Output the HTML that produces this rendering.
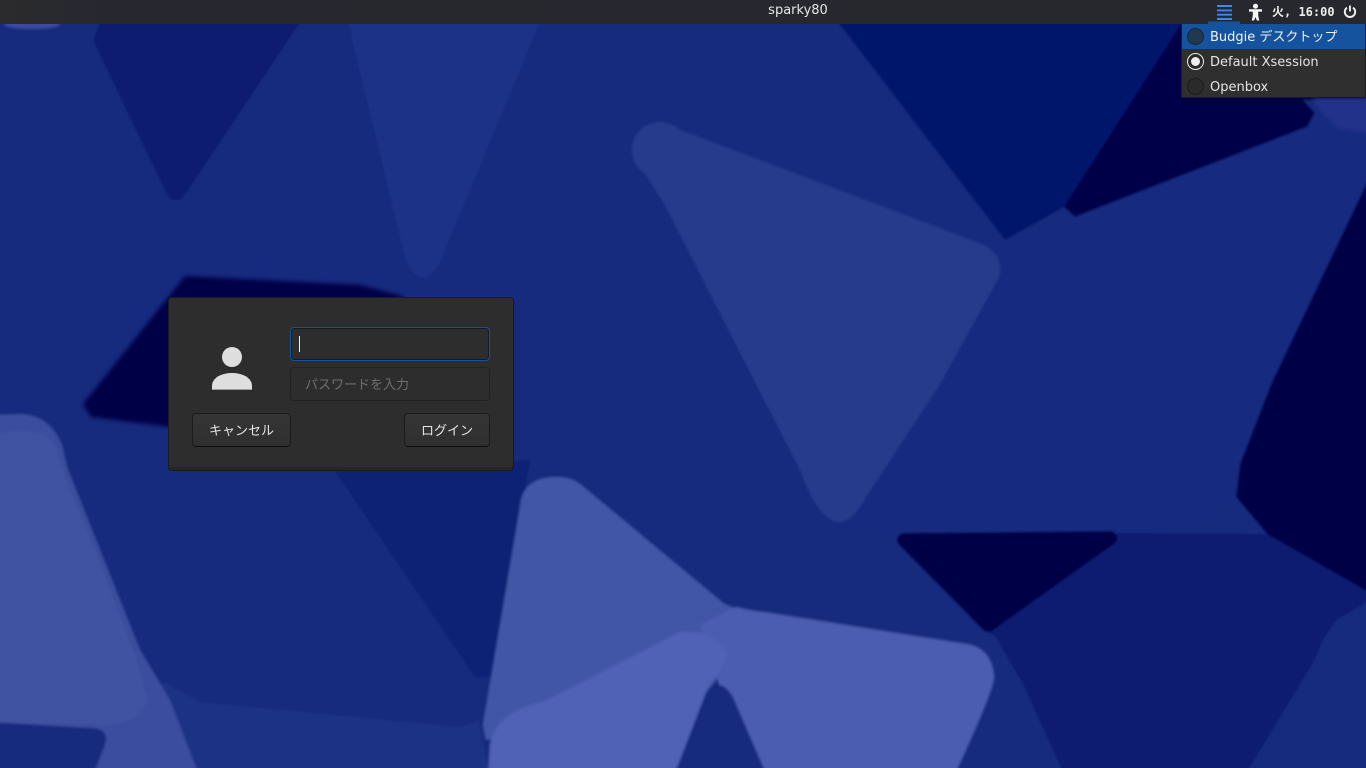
<!DOCTYPE html>
<html lang="ja"><head><meta charset="utf-8"><title>sparky80</title>
<style>
html,body{margin:0;padding:0;width:1366px;height:768px;overflow:hidden;background:#172a7e}
body{position:relative;font-family:"DejaVu Sans","Noto Sans CJK JP",sans-serif;color:#eee}
.abs{position:absolute}
#bg{position:absolute;left:0;top:0}
#panel{left:0;top:0;width:1366px;height:24px;background:linear-gradient(90deg,#2b2b2d 0,#26282e 120px)}
#host{left:668px;width:260px;top:3px;text-align:center;font-size:13px;line-height:16px;color:#e6e6e6}
#clock{left:1272px;top:4px;font:bold 12px/16px "DejaVu Sans Mono","Noto Sans CJK JP",monospace;color:#eee;white-space:pre}
#menu{left:1181px;top:24px;width:183px;height:73px;background:#2f2f2f;border:1px solid #1b1b1b;border-top:0}
.row{position:absolute;left:0;width:183px;height:25px;font-size:13px;line-height:25px;color:#e4e4e4;white-space:nowrap}
.row span{position:absolute;left:28px;top:0}
.radio{position:absolute;left:5px;top:4px;width:15px;height:15px;border:1px solid #1b1b1b;border-radius:50%;background:#2a2a2a}
#dialog{left:168px;top:297px;width:344px;height:172px;background:#2d2d2d;border:1px solid #1b1b1b;border-radius:4px;box-shadow:inset 0 -3px 0 #262626}
.entry{box-sizing:border-box;height:34px;width:200px;left:290px;background:#2d2d2d;border:1px solid #222;border-radius:4px}
.btn{box-sizing:border-box;height:34px;top:413px;background:linear-gradient(#353535,#2f2f2f);border:1px solid #1b1b1b;border-bottom-color:#0e0e0e;border-radius:4px;font-size:13px;line-height:32px;text-align:center;color:#e6e6e6;font-family:"Noto Sans CJK JP",sans-serif}
</style></head><body>
<svg id="bg" width="1366" height="768" viewBox="0 0 1366 768" xmlns="http://www.w3.org/2000/svg">
<defs>
<filter id="b" x="-5%" y="-5%" width="110%" height="110%"><feGaussianBlur stdDeviation="1.2"/></filter>
<filter id="b2" x="-10%" y="-10%" width="120%" height="120%"><feGaussianBlur stdDeviation="2.2"/></filter>
</defs>
<g filter="url(#b)" stroke-linejoin="round">
<rect x="-10" y="-10" width="1386" height="788" fill="#172a7e"/>
<polygon points="821,0 1200,0 1064,207 1005,240" fill="#00126a"/>
<polygon points="1190,10 1400,10 1400,100 1303,100 1315,113 1307,127 1075,217 1064,207" fill="#000048"/>
<polygon points="1366,140 1400,140 1400,610 1366,597 1267,534 1236,497 1240,464" fill="#000046"/>
<path d="M990,248 L1075,217 L1307,127 L1366,110 L1380,155 L1271,384 L1240,462 Q1228,528 1166,533 L880,533 L835,520 Z" fill="#182a80"/>
<polygon points="335,471 530,460 492,677 475,677" fill="#0d2174"/>
<polygon points="104,40 120,0 303,0 176,190" fill="#081b6f" stroke="#081b6f" stroke-width="20"/>
<path d="M344,0 L353,43 L405,258 Q422,296 440,262 L545,10 Z" fill="#1f3287"/>
<circle cx="660" cy="150" r="28" fill="#283a8c"/>
<path d="M678,129 L979,243 Q1005,254 999,277 L940,384 L866,497 Q833,558 800,470 L756,384 L666,207 L640,165 Z" fill="#283a8c"/>
<polygon points="1118,533 1267,534 1400,610 1366,780 1066,778 1023,684 996,637 988,632" fill="#071b70"/>
<polygon points="904,540 1110,538 988,625" fill="#000046" stroke="#000046" stroke-width="14"/>
<polygon points="1366,603 1336,620 1323,640 1313,663 1243,778 1400,778 1400,600" fill="#192b7e"/>
<polygon points="150,685 167,683 200,702 462,727 479,720 490,778 196,778" fill="#1e3084"/>
<path d="M-10,415 L22,414 Q50,416 62,445 L67,467 L100,550 L140,650 L170,700 L200,778 L-10,778 Z" fill="#3b4d9e"/>
<path d="M-10,437 Q25,424 50,438 Q58,450 66,480 L95,550 L135,655 L148,700 Q140,722 110,725 L-10,722 Z" fill="#3f52a2"/>
<path d="M-10,722 L90,728 Q110,728 105,745 L92,778 L-10,778 Z" fill="#172a7e"/>
<path d="M520,507 Q522,477 557,477 Q570,477 580,484 L723,603 Q735,611 770,613 L700,700 L486,740 L483,725 Z" fill="#4357a8"/>
<path d="M700,625 L737,607 Q745,610 770,613 L966,644 Q992,648 994,677 Q994,690 953,778 L766,778 L720,687 Z" fill="#4b5db0"/>
<path d="M543,702 L680,632 Q713,630 727,652 Q727,662 708,687 L673,778 L488,778 L490,745 Q495,712 543,702 Z" fill="#5062b5"/>
<path d="M708,692 Q720,676 733,697 L768,778 L673,778 Z" fill="#172a7e"/>
<ellipse cx="32" cy="24" rx="28" ry="5" fill="#3a4c9d"/>
</g>
<polygon filter="url(#b2)" points="185,276 361,285 405,297 300,420 170,427 91,417 83,404" fill="#000046"/>
<polygon filter="url(#b2)" points="1312,98 1400,98 1400,134 1366,133 1337,128 1320,110" fill="#20318a"/>
</svg>

<div class="abs" id="panel"></div>
<div class="abs" id="host">sparky80</div>

<svg class="abs" style="left:1208px;top:0" width="32" height="24" viewBox="0 0 32 24">
<path d="M9 6H24M9 10.4H24M9 14.7H24M9 19H24" stroke="#3b8ae6" stroke-width="1.9" fill="none"/>
<rect x="0" y="21.5" width="32" height="2.5" fill="#15539e"/>
</svg>
<svg class="abs" style="left:1247px;top:3px" width="18" height="19" viewBox="0 0 18 19">
<circle cx="8.5" cy="3.2" r="2.5" fill="#f6f6f6"/>
<path d="M2 6.2H15V8.6H11.2V12.8L12.3 17.5H9.9L8.5 14L7.1 17.5H4.7L5.8 12.8V8.6H2Z" fill="#f6f6f6"/>
</svg>
<div class="abs" id="clock">火, 16:00</div>
<svg class="abs" style="left:1342px;top:4px" width="16" height="16" viewBox="0 0 16 16">
<path d="M5 3.6A5.2 5.2 0 1 0 11 3.6" fill="none" stroke="#f0f0f0" stroke-width="1.9"/>
<path d="M8 1.5V7.5" stroke="#f0f0f0" stroke-width="1.9"/>
</svg>

<div class="abs" id="menu">
  <div class="row" style="top:0;background:#15539e;color:#f2f2f2"><div class="radio" style="background:#21384f;border-color:#14283f"></div><span style="top:1px">Budgie デスクトップ</span></div>
  <div class="row" style="top:25px"><div class="radio" style="border:1px solid #eee;background:#2a2a2a"></div><div style="position:absolute;left:9px;top:8px;width:9px;height:9px;border-radius:50%;background:#eee"></div><span style="top:1px">Default Xsession</span></div>
  <div class="row" style="top:50px"><div class="radio"></div><span style="top:1px">Openbox</span></div>
</div>

<div class="abs" id="dialog"></div>
<svg class="abs" style="left:208px;top:344px" width="48" height="48" viewBox="0 0 48 48">
<circle cx="24" cy="13" r="10" fill="#dedede"/>
<path d="M4 46V42C4 34 13 29 24 29S44 34 44 42V46Z" fill="#dedede"/>
<rect x="4" y="45" width="40" height="1" fill="#a0a0a0"/>
</svg>
<div class="abs entry" style="top:327px;border:1px solid #15539e;box-shadow:0 0 0 1px #111a28 inset"></div>
<div class="abs" style="left:299px;top:336px;width:1px;height:16px;background:#eee"></div>
<div class="abs entry" style="top:367px"></div>
<div class="abs" style="left:305px;top:375px;font:13px/18px 'Noto Sans CJK JP',sans-serif;color:#6f6f6f">パスワードを入力</div>
<div class="abs btn" style="left:192px;width:99px">キャンセル</div>
<div class="abs btn" style="left:404px;width:86px">ログイン</div>
</body></html>
